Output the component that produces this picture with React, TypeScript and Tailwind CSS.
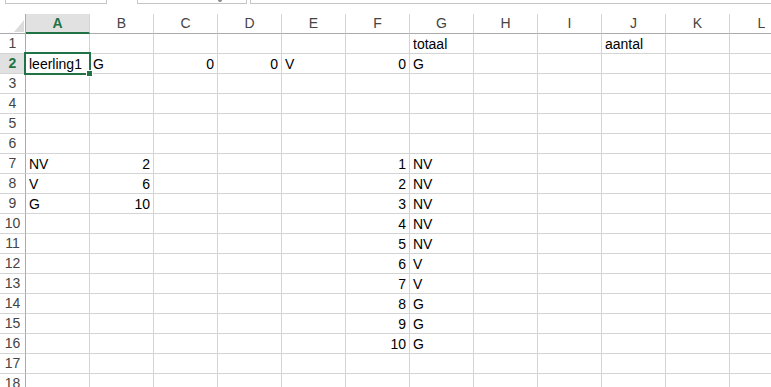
import React from "react";

const columns = ["A", "B", "C", "D", "E", "F", "G", "H", "I", "J", "K", "L"];

// cell values per row, keyed by column letter; numbers are right aligned
const data: Record<number, Record<string, string | number>> = {
  1: { G: "totaal", J: "aantal" },
  2: { A: "leerling1", B: "G", C: 0, D: 0, E: "V", F: 0, G: "G" },
  7: { A: "NV", B: 2, F: 1, G: "NV" },
  8: { A: "V", B: 6, F: 2, G: "NV" },
  9: { A: "G", B: 10, F: 3, G: "NV" },
  10: { F: 4, G: "NV" },
  11: { F: 5, G: "NV" },
  12: { F: 6, G: "V" },
  13: { F: 7, G: "V" },
  14: { F: 8, G: "G" },
  15: { F: 9, G: "G" },
  16: { F: 10, G: "G" },
};

const rows = Array.from({ length: 18 }, (_, i) => i + 1);

export default function App() {
  return (
    <div className="relative w-[771px] h-[387px] overflow-hidden bg-white font-['Liberation_Sans',Arial,sans-serif] text-[14px] text-black">
      {/* formula bar remains */}
      <div className="flex h-[14px] items-start">
        <div className="ml-[5px] w-[102px] h-[4px] border-x border-b border-[#c6c6c6]" />
        <div className="relative ml-[30px] w-[110px] h-[4px] border-x border-b border-[#c6c6c6]">
          <span className="absolute left-[80px] top-0 w-[4px] h-[2px] rounded-b-full bg-[#8a8a8a]" />
        </div>
        <div className="ml-[3px] flex-1 h-[4px] border-l border-b border-[#c6c6c6]" />
      </div>

      {/* column headers */}
      <div className="flex h-[20px]">
        <div className="w-[26px] shrink-0 border-r border-b border-[#ababab] flex items-end justify-end pr-[1px] pb-[1px]">
          <svg width="10" height="12" viewBox="0 0 10 12">
            <polygon points="0,12 10,12 10,0" fill="#dcdcdc" />
          </svg>
        </div>
        {columns.map((c) => (
          <div
            key={c}
            className={`w-[64px] shrink-0 flex items-center justify-center border-r border-[#d4d4d4] ${
              c === "A"
                ? "bg-[#e1e1e1] border-b-2 border-b-[#217346] text-[#217346] font-bold"
                : "border-b border-b-[#ababab] text-[#444]"
            }`}
          >
            {c}
          </div>
        ))}
      </div>

      {/* grid rows */}
      {rows.map((r) => (
        <div key={r} className="flex h-[20px]">
          <div
            className={`w-[26px] shrink-0 flex items-center justify-center border-r border-r-[#ababab] border-b border-b-[#d4d4d4] ${
              r === 2 ? "bg-[#e1e1e1] text-[#217346] font-bold" : "text-[#444]"
            }`}
          >
            {r}
          </div>
          {columns.map((c) => {
            const v = data[r]?.[c];
            const isNum = typeof v === "number";
            return (
              <div
                key={c}
                className={`w-[64px] shrink-0 flex items-center pt-[1px] whitespace-nowrap border-r border-b border-[#d4d4d4] ${
                  isNum ? "justify-end pr-[3px]" : "pl-[3px]"
                }`}
              >
                {v}
              </div>
            );
          })}
        </div>
      ))}

      {/* active cell A2 */}
      <div className="absolute left-[24px] top-[52px] w-[67px] h-[23px] border-2 border-[#217346]" />
      <div className="absolute left-[86px] top-[70px] w-[7px] h-[7px] bg-[#217346] border border-white" />
    </div>
  );
}
